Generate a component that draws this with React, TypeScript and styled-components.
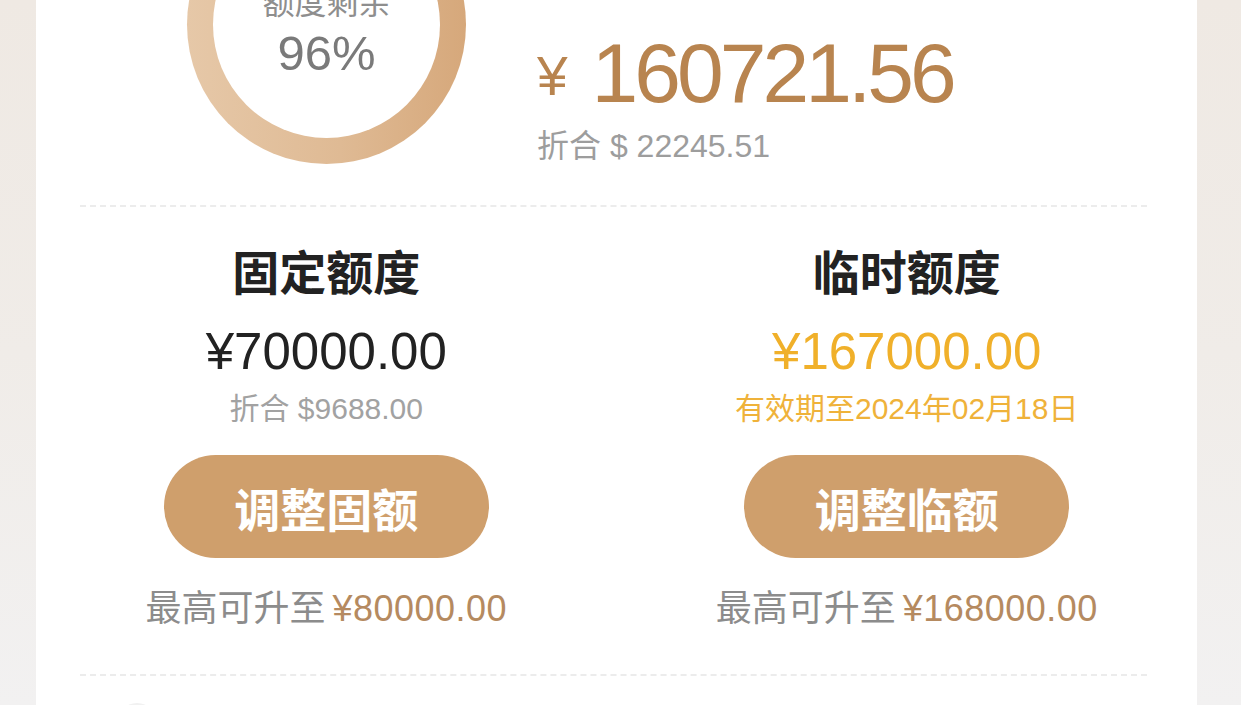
import React from 'react'
import styled, { createGlobalStyle } from 'styled-components'

const GlobalStyle = createGlobalStyle`
  html, body {
    margin: 0;
    padding: 0;
    height: 100%;
    overflow: hidden;
  }
  body {
    background: linear-gradient(180deg, #efe9e3 0%, #f0ece8 50%, #f2f1f1 100%);
    font-family: 'Liberation Sans', 'Noto Sans CJK SC', sans-serif;
  }
`

const Page = styled.div`
  width: 1241px;
  height: 705px;
  overflow: hidden;
`

const Card = styled.div`
  width: 1161px;
  margin: -140px 0 0 36px;
  background: #ffffff;
`

const Summary = styled.div`
  display: flex;
  align-items: flex-end;
  padding: 25px 0 0 151px;
  gap: 71px;
`

const Ring = styled.div`
  width: 279px;
  height: 279px;
  padding: 26px;
  box-sizing: border-box;
  border-radius: 50%;
  background: linear-gradient(90deg, #e6c8a8 0%, #dfba94 55%, #d6a87b 100%);
  flex-shrink: 0;
`

const RingInner = styled.div`
  width: 100%;
  height: 100%;
  border-radius: 50%;
  background: #ffffff;
  display: flex;
  flex-direction: column;
  align-items: center;
  justify-content: center;
  padding-top: 12px;
  box-sizing: border-box;
  gap: 5px;
`

const RingLabel = styled.div`
  font-family: 'Noto Sans CJK SC', sans-serif;
  font-size: 32px;
  line-height: 40px;
  color: #8e8e8e;
`

const RingValue = styled.div`
  font-size: 49px;
  line-height: 56px;
  color: #7a7a7a;
`

const Balance = styled.div`
  display: flex;
  flex-direction: column;
  gap: 7px;
  margin-bottom: -3px;
`

const BigAmount = styled.div`
  font-size: 84px;
  line-height: 84px;
  color: #b8844f;
  letter-spacing: -4px;
  white-space: nowrap;
`

const BigYen = styled.span`
  font-size: 55px;
  letter-spacing: 0;
  margin-right: 24px;
  vertical-align: 7px;
`

const Converted = styled.div`
  font-size: 32px;
  line-height: 42px;
  color: #9d9d9d;
  white-space: nowrap;
`

const Divider = styled.div`
  margin: 0 50px 0 44px;
  border-top: 2px dashed #ececec;
`

const TopDivider = styled(Divider)`
  margin-top: 41px;
`

const Columns = styled.div`
  display: grid;
  grid-template-columns: 1fr 1fr;
  padding: 35px 0 43px;
`

const Column = styled.div`
  display: flex;
  flex-direction: column;
  align-items: center;
`

const ColumnTitle = styled.div`
  font-family: 'Noto Sans CJK SC', sans-serif;
  font-weight: 700;
  font-size: 47px;
  line-height: 56px;
  color: #222222;
`

const Amount = styled.div<{ $accent?: boolean }>`
  margin-top: 24px;
  font-size: 51px;
  line-height: 60px;
  color: ${(p) => (p.$accent ? '#f0b02a' : '#222222')};
  white-space: nowrap;
`

const SubText = styled.div<{ $accent?: boolean }>`
  margin-top: 8px;
  font-size: 30px;
  line-height: 38px;
  color: ${(p) => (p.$accent ? '#efb23a' : '#a2a2a2')};
  white-space: nowrap;
`

const ActionButton = styled.button`
  margin-top: 27px;
  width: 325px;
  height: 103px;
  border: none;
  border-radius: 52px;
  background: #cf9f6c;
  color: #ffffff;
  font-family: 'Noto Sans CJK SC', sans-serif;
  font-weight: 700;
  font-size: 46px;
  line-height: 1;
  cursor: pointer;
`

const Limit = styled.div`
  margin-top: 29px;
  font-size: 36px;
  line-height: 44px;
  color: #8c8c8c;
  white-space: nowrap;
`

const LimitValue = styled.span`
  color: #b58a60;
  margin-left: 7px;
  letter-spacing: 0.5px;
`

const BottomRow = styled.div`
  display: flex;
  align-items: center;
  padding: 27px 44px 40px 81px;
`

const RowIcon = styled.div`
  width: 40px;
  height: 40px;
  border-radius: 50%;
  background: #f1f1f1;
`

const columns = [
  {
    title: '固定额度',
    amount: '¥70000.00',
    sub: '折合 $9688.00',
    accent: false,
    action: '调整固额',
    limit: '¥80000.00',
  },
  {
    title: '临时额度',
    amount: '¥167000.00',
    sub: '有效期至2024年02月18日',
    accent: true,
    action: '调整临额',
    limit: '¥168000.00',
  },
]

export default function App() {
  return (
    <Page>
      <GlobalStyle />
      <Card>
        <Summary>
          <Ring>
            <RingInner>
              <RingLabel>额度剩余</RingLabel>
              <RingValue>96%</RingValue>
            </RingInner>
          </Ring>
          <Balance>
            <BigAmount>
              <BigYen>¥</BigYen>160721.56
            </BigAmount>
            <Converted>折合 $ 22245.51</Converted>
          </Balance>
        </Summary>

        <TopDivider />

        <Columns>
          {columns.map((c) => (
            <Column key={c.title}>
              <ColumnTitle>{c.title}</ColumnTitle>
              <Amount $accent={c.accent}>{c.amount}</Amount>
              <SubText $accent={c.accent}>{c.sub}</SubText>
              <ActionButton>{c.action}</ActionButton>
              <Limit>
                最高可升至<LimitValue>{c.limit}</LimitValue>
              </Limit>
            </Column>
          ))}
        </Columns>

        <Divider />

        <BottomRow>
          <RowIcon />
        </BottomRow>
      </Card>
    </Page>
  )
}
